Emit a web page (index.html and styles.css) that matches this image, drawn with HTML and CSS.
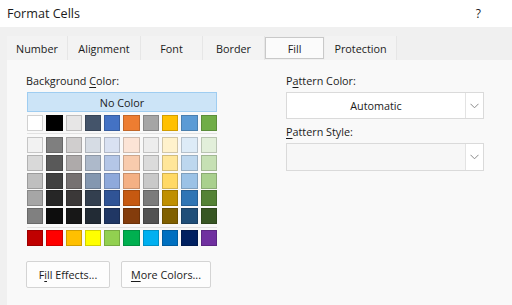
FILE: index.html
```html
<!DOCTYPE html>
<html>
<head>
<meta charset="utf-8">
<link rel="stylesheet" href="styles.css">
</head>
<body>
<div class="titlebar">
  <span class="title">Format Cells</span>
  <span class="help">?</span>
</div>
<div class="tabs">
  <div class="tab">Number</div>
  <div class="tab">Alignment</div>
  <div class="tab">Font</div>
  <div class="tab">Border</div>
  <div class="tab selected">Fill</div>
  <div class="tab">Protection</div>
</div>
<div class="panel">
  <div class="left">
    <div class="label">Background <u>C</u>olor:</div>
    <div class="nocolor">No Color</div>
    <div class="grid top">
      <i style="background:#FFFFFF"></i><i style="background:#000000"></i><i style="background:#E7E6E6"></i><i style="background:#44546A"></i><i style="background:#4472C4"></i><i style="background:#ED7D31"></i><i style="background:#A5A5A5"></i><i style="background:#FFC000"></i><i style="background:#5B9BD5"></i><i style="background:#70AD47"></i>
    </div>
    <div class="sep"></div>
    <div class="grid shades">
      <i style="background:#F2F2F2"></i><i style="background:#7F7F7F"></i><i style="background:#D0CECE"></i><i style="background:#D6DCE4"></i><i style="background:#D9E1F2"></i><i style="background:#FCE4D6"></i><i style="background:#EDEDED"></i><i style="background:#FFF2CC"></i><i style="background:#DDEBF7"></i><i style="background:#E2EFDA"></i>
      <i style="background:#D9D9D9"></i><i style="background:#595959"></i><i style="background:#AEAAAA"></i><i style="background:#ADB9CA"></i><i style="background:#B4C6E7"></i><i style="background:#F8CBAD"></i><i style="background:#DBDBDB"></i><i style="background:#FFE699"></i><i style="background:#BDD7EE"></i><i style="background:#C6E0B4"></i>
      <i style="background:#BFBFBF"></i><i style="background:#404040"></i><i style="background:#767171"></i><i style="background:#8497B0"></i><i style="background:#8EA9DB"></i><i style="background:#F4B084"></i><i style="background:#C9C9C9"></i><i style="background:#FFD966"></i><i style="background:#9BC2E6"></i><i style="background:#A9D08E"></i>
      <i style="background:#A6A6A6"></i><i style="background:#262626"></i><i style="background:#3B3838"></i><i style="background:#333F4F"></i><i style="background:#305496"></i><i style="background:#C65911"></i><i style="background:#7B7B7B"></i><i style="background:#BF8F00"></i><i style="background:#2F75B5"></i><i style="background:#548235"></i>
      <i style="background:#808080"></i><i style="background:#0D0D0D"></i><i style="background:#171717"></i><i style="background:#222B35"></i><i style="background:#203764"></i><i style="background:#833C0C"></i><i style="background:#525252"></i><i style="background:#806000"></i><i style="background:#1F4E78"></i><i style="background:#375623"></i>
    </div>
    <div class="sep sep2"></div>
    <div class="grid std">
      <i style="background:#C00000"></i><i style="background:#FF0000"></i><i style="background:#FFC000"></i><i style="background:#FFFF00"></i><i style="background:#92D050"></i><i style="background:#00B050"></i><i style="background:#00B0F0"></i><i style="background:#0070C0"></i><i style="background:#002060"></i><i style="background:#7030A0"></i>
    </div>
    <div class="buttons">
      <div class="btn fill">F<u>i</u>ll Effects...</div>
      <div class="btn more"><u>M</u>ore Colors...</div>
    </div>
  </div>
  <div class="right">
    <div class="label">P<u>a</u>ttern Color:</div>
    <div class="combo">
      <span class="value">Automatic</span>
      <span class="arrow"><svg width="9" height="6" viewBox="0 0 9 6"><path d="M0.5 0.8 L4.5 4.8 L8.5 0.8" fill="none" stroke="#8a8a8a" stroke-width="1"/></svg></span>
    </div>
    <div class="label label2"><u>P</u>attern Style:</div>
    <div class="combo empty">
      <span class="value"></span>
      <span class="arrow"><svg width="9" height="6" viewBox="0 0 9 6"><path d="M0.5 0.8 L4.5 4.8 L8.5 0.8" fill="none" stroke="#8a8a8a" stroke-width="1"/></svg></span>
    </div>
  </div>
</div>
</body>
</html>
```
FILE: styles.css
```css
* { box-sizing: border-box; }
html, body { margin: 0; padding: 0; }
body {
  width: 512px;
  height: 305px;
  overflow: hidden;
  background: #f0f0f0;
  font-family: "Open Sans", "Noto Sans", sans-serif;
  font-size: 10.8px;
  color: #1b1b1b;
}
u { text-decoration: underline; text-underline-offset: 2px; text-decoration-thickness: 1px; }
.titlebar {
  height: 27px;
  background: #ffffff;
  display: flex;
  align-items: center;
  justify-content: space-between;
  padding: 0 31px 0 7px;
}
.title { font-size: 12.6px; }
.help { font-size: 12px; }
.tabs {
  display: grid;
  grid-template-columns: 61px 73px 62px 62px 60px 72px;
  width: max-content;
  margin-top: 9px;
  margin-left: 7px;
  height: 24px;
}
.tab {
  background: #f3f3f3;
  border-right: 1px solid #e6e6e6;
  display: flex;
  align-items: center;
  justify-content: center;
  font-size: 10.8px;
}
.tab.selected {
  background: #fbfbfb;
  border: 1px solid #c9c9c9;
  margin: 1px 1px 1px 0;
}
.panel {
  margin-left: 7px;
  height: 245px;
  background: #f9f9f9;
  display: flex;
}
.left {
  width: 210px;
  padding-left: 20px;
  padding-top: 13px;
}
.label { height: 16px; line-height: 16px; margin-left: -1px; }
.nocolor {
  margin-top: 3px;
  width: 190px;
  height: 20px;
  background: #cce4f7;
  border: 1px solid #9fcdf1;
  display: flex;
  align-items: center;
  justify-content: center;
}
.grid {
  width: 190px;
  display: grid;
  grid-template-columns: repeat(10, 1fr);
  column-gap: 3px;
}
.grid i {
  display: block;
  height: 16px;
  border: 1px solid rgba(0,0,0,0.18);
}
.top { margin-top: 3px; }
.sep { width: 190px; height: 1px; background: #e2e2e2; margin-top: 2px; }
.shades { margin-top: 3px; row-gap: 1.75px; }
.sep2 { margin-top: 3px; }
.std { margin-top: 2px; }
.buttons {
  display: flex;
  gap: 11px;
  margin-top: 15px;
  margin-left: -1px;
}
.btn {
  height: 27px;
  background: #fdfdfd;
  border: 1px solid #d4d4d4;
  border-radius: 2px;
  display: flex;
  align-items: center;
  justify-content: center;
}
.btn.fill { width: 84px; }
.btn.more { width: 90px; }
.right {
  margin-left: 69px;
  width: 198px;
  padding-top: 13px;
}
.right .label { margin-left: 0; }
.combo {
  margin-top: 3px;
  height: 27px;
  background: #ffffff;
  border: 1px solid #dadada;
  display: flex;
}
.combo .value {
  flex: 1;
  display: flex;
  align-items: center;
  justify-content: center;
}
.combo .arrow {
  width: 18px;
  border-left: 1px solid #e3e3e3;
  display: flex;
  align-items: center;
  justify-content: center;
  background: #ffffff;
}
.label2 { margin-top: 5px; }
.combo.empty { height: 28px; margin-top: 3px; background: #f7f7f7; }
```
